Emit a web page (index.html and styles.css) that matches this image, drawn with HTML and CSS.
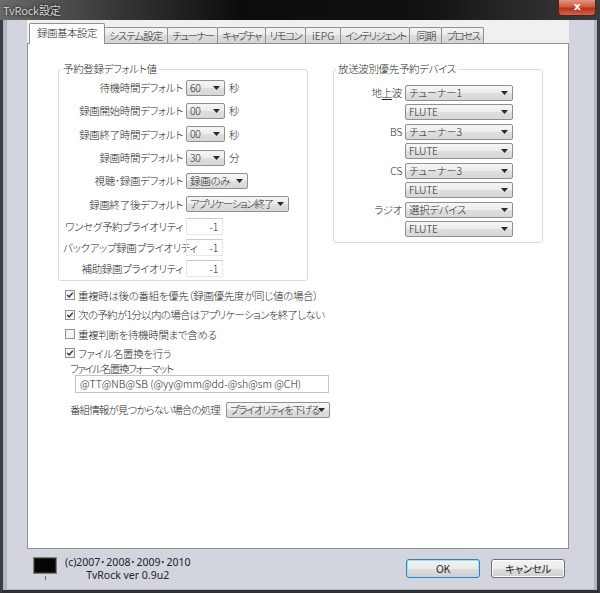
FILE: index.html
```html
<!DOCTYPE html>
<html>
<head>
<meta charset="utf-8">
<link rel="stylesheet" href="styles.css">
</head>
<body>

<div class="window">
  <div class="titlebar">
    <span class="title">TvRock設定</span>
    <div class="closebtn">x</div>
  </div>

  <div class="frame">
    <div class="tabstrip">
      <div class="tab active">録画基本設定</div>
      <div class="tab">システム設定</div>
      <div class="tab kana">チューナー</div>
      <div class="tab kana">キャプチャ</div>
      <div class="tab kana">リモコン</div>
      <div class="tab latin">iEPG</div>
      <div class="tab kana">インテリジェント</div>
      <div class="tab wide">同期</div>
      <div class="tab kana">プロセス</div>
    </div>

    <div class="panel">
      <div class="groups">
        <!-- left group -->
        <fieldset class="group defaults">
          <legend>予約登録デフォルト値</legend>
          <div class="row">
            <span class="lbl">待機時間デフォルト</span>
            <div class="combo num"><span>60</span><svg class="arrow" viewBox="0 0 7 4"><path d="M0 0h7L3.5 4z"/></svg></div>
            <span class="unit">秒</span>
          </div>
          <div class="row">
            <span class="lbl">録画開始時間デフォルト</span>
            <div class="combo num"><span>00</span><svg class="arrow" viewBox="0 0 7 4"><path d="M0 0h7L3.5 4z"/></svg></div>
            <span class="unit">秒</span>
          </div>
          <div class="row">
            <span class="lbl">録画終了時間デフォルト</span>
            <div class="combo num"><span>00</span><svg class="arrow" viewBox="0 0 7 4"><path d="M0 0h7L3.5 4z"/></svg></div>
            <span class="unit">秒</span>
          </div>
          <div class="row">
            <span class="lbl">録画時間デフォルト</span>
            <div class="combo num"><span>30</span><svg class="arrow" viewBox="0 0 7 4"><path d="M0 0h7L3.5 4z"/></svg></div>
            <span class="unit">分</span>
          </div>
          <div class="row">
            <span class="lbl">視聴･録画デフォルト</span>
            <div class="combo mode"><span>録画のみ</span><svg class="arrow" viewBox="0 0 7 4"><path d="M0 0h7L3.5 4z"/></svg></div>
          </div>
          <div class="row">
            <span class="lbl">録画終了後デフォルト</span>
            <div class="combo after"><span>アプリケーション終了</span><svg class="arrow" viewBox="0 0 7 4"><path d="M0 0h7L3.5 4z"/></svg></div>
          </div>
          <div class="row short">
            <span class="lbl">ワンセグ予約プライオリティ</span>
            <div class="field">-1</div>
          </div>
          <div class="row short">
            <span class="lbl">バックアップ録画プライオリティ</span>
            <div class="field">-1</div>
          </div>
          <div class="row short">
            <span class="lbl">補助録画プライオリティ</span>
            <div class="field">-1</div>
          </div>
        </fieldset>

        <!-- right group -->
        <fieldset class="group devices">
          <legend>放送波別優先予約デバイス</legend>
          <div class="devgrid">
            <span class="lbl">地<u>上</u>波</span>
            <div class="combo dev"><span>チューナー1</span><svg class="arrow" viewBox="0 0 7 4"><path d="M0 0h7L3.5 4z"/></svg></div>
            <span></span>
            <div class="combo dev"><span>FLUTE</span><svg class="arrow" viewBox="0 0 7 4"><path d="M0 0h7L3.5 4z"/></svg></div>
            <span class="lbl">BS</span>
            <div class="combo dev"><span>チューナー3</span><svg class="arrow" viewBox="0 0 7 4"><path d="M0 0h7L3.5 4z"/></svg></div>
            <span></span>
            <div class="combo dev"><span>FLUTE</span><svg class="arrow" viewBox="0 0 7 4"><path d="M0 0h7L3.5 4z"/></svg></div>
            <span class="lbl">CS</span>
            <div class="combo dev"><span>チューナー3</span><svg class="arrow" viewBox="0 0 7 4"><path d="M0 0h7L3.5 4z"/></svg></div>
            <span></span>
            <div class="combo dev"><span>FLUTE</span><svg class="arrow" viewBox="0 0 7 4"><path d="M0 0h7L3.5 4z"/></svg></div>
            <span class="lbl">ラジオ</span>
            <div class="combo dev"><span>選択デバイス</span><svg class="arrow" viewBox="0 0 7 4"><path d="M0 0h7L3.5 4z"/></svg></div>
            <span></span>
            <div class="combo dev"><span>FLUTE</span><svg class="arrow" viewBox="0 0 7 4"><path d="M0 0h7L3.5 4z"/></svg></div>
          </div>
        </fieldset>
      </div>

      <div class="checks">
        <div class="check">
          <svg class="box" viewBox="0 0 10 10"><rect x="0.5" y="0.5" width="9" height="9"/><path class="tick" d="M2.2 5l2 2 3.6-4.4"/></svg>
          <span>重複時は後の番組を優先（録画優先度が同じ値の場合）</span>
        </div>
        <div class="check">
          <svg class="box" viewBox="0 0 10 10"><rect x="0.5" y="0.5" width="9" height="9"/><path class="tick" d="M2.2 5l2 2 3.6-4.4"/></svg>
          <span class="kana">次の予約が1分以内の場合はアプリケーションを終了しない</span>
        </div>
        <div class="check">
          <svg class="box" viewBox="0 0 10 10"><rect x="0.5" y="0.5" width="9" height="9"/></svg>
          <span>重複判断を待機時間まで含める</span>
        </div>
        <div class="check">
          <svg class="box" viewBox="0 0 10 10"><rect x="0.5" y="0.5" width="9" height="9"/><path class="tick" d="M2.2 5l2 2 3.6-4.4"/></svg>
          <span>ファイル名置換を行う</span>
        </div>
      </div>

      <div class="format">
        <div class="format-label">ファイル名置換フォーマット</div>
        <div class="format-input">@TT@NB@SB (@yy@mm@dd-@sh@sm @CH)</div>
      </div>

      <div class="notfound">
        <span class="kana">番組情報が見つからない場合の処理</span>
        <div class="combo prio"><span>プライオリティを下げる</span><svg class="arrow" viewBox="0 0 7 4"><path d="M0 0h7L3.5 4z"/></svg></div>
      </div>
    </div>

    <div class="footer">
      <div class="swatch">
        <div class="swatch-box"></div>
        <div class="swatch-tick"></div>
      </div>
      <div class="credits">
        <div>(c)2007･2008･2009･2010</div>
        <div>TvRock ver 0.9u2</div>
      </div>
      <div class="buttons">
        <div class="btn default">OK</div>
        <div class="btn">キャンセル</div>
      </div>
    </div>
  </div>
</div>

</body>
</html>
```

FILE: styles.css
```css
* {box-sizing: border-box;}

html, body {
  margin: 0;
}

body {
  width: 600px;
  height: 593px;
  overflow: hidden;
  background: #1e1e1e;
  font-family: "Noto Sans CJK JP", sans-serif;
  font-size: 10.5px;
  font-weight: 300;
  letter-spacing: -0.35px;
  font-feature-settings: "palt";
  color: #262626;
}

.window {
  width: 600px;
  height: 593px;
  display: flex;
  flex-direction: column;
}

/* Title bar */
.titlebar {
  height: 20px;
  display: flex;
  align-items: flex-start;
  background: linear-gradient(to right, #6a6a6a 0%, #3a3a3a 18%, #0c0c0c 40%, #111 70%, #3c3c3c 100%);
}

.title {
  padding: 2px 0 0 3px;
  line-height: 16px;
  font-size: 11px;
  font-weight: 400;
  letter-spacing: -0.2px;
  color: #d8d8d8;
  text-shadow: 0 0 3px #000;
}

.closebtn {
  margin-left: auto;
  margin-right: 4px;
  width: 38px;
  height: 16px;
  border: 1px solid #5a1c14;
  border-top: 0;
  border-radius: 0 0 4px 4px;
  background: linear-gradient(#e3957f, #cf5a40 45%, #b83218 55%, #d0644a);
  color: #fff;
  font-family: "DejaVu Sans", sans-serif;
  font-weight: bold;
  font-size: 11px;
  line-height: 14px;
  text-align: center;
}

/* Frame */
.frame {
  flex: 1;
  display: flex;
  flex-direction: column;
  background: #d2d5de;
  border-left: 3px solid #3b3d42;
  border-right: 3px solid #3b3d42;
  border-bottom: 3px solid #2e3034;
  box-shadow: inset 4px 0 0 #b3b7c0, inset -3px 0 0 #b3b7c0, inset 0 -1px 0 #b3b7c0;
  padding: 0 28px 0 24px;
}

/* Tabs */
.tabstrip {
  height: 23px;
  display: flex;
  align-items: flex-end;
  padding-left: 4px;
  background: #f0f0f0;
}

.tab {
  height: 16px;
  padding: 0 5px;
  margin-right: -1px;
  border: 1px solid #8e9199;
  border-bottom: 0;
  border-radius: 2px 2px 0 0;
  background: linear-gradient(#f3f3f3, #ebebeb 50%, #dcdcdc 50%, #d4d4d4);
  line-height: 15px;
  letter-spacing: -1px;
  white-space: nowrap;
}

.tab.kana {
  padding: 0 4px;
  letter-spacing: -1.6px;
}

.tab.latin {
  padding: 0 6px;
  letter-spacing: 0;
}

.tab.wide {
  padding: 0 6px;
}

.tab.active {
  position: relative;
  z-index: 1;
  height: 21px;
  margin: 0 -1px -1px -2px;
  padding: 0 7px;
  background: #fff;
  letter-spacing: -0.5px;
  line-height: 18px;
}

.tab.active + .tab {
  margin-left: -1px;
}

.panel {
  height: 506px;
  background: #fff;
  border: 1px solid #8c8f96;
  padding: 18px 0 0 30px;
}

/* Group boxes */
.groups {
  display: flex;
  align-items: flex-start;
  gap: 25px;
}

.group {
  margin: 0;
  min-width: 0;
  border: 1px solid #d9dadd;
  border-radius: 3px;
  padding: 0 0 1px 4px;
}

.group legend {
  padding: 0 2px;
  margin-left: -2px;
  line-height: 14px;
}

.defaults {
  width: 250px;
}

.devices {
  width: 210px;
  padding-bottom: 3px;
}

.row {
  height: 23.3px;
  display: flex;
  align-items: center;
}

.row.short {
  height: 21px;
}

.lbl {
  width: 120px;
  margin-right: 3px;
  text-align: right;
  white-space: nowrap;
}

.lbl u {
  text-decoration-thickness: 1px;
  text-underline-offset: 2px;
}

.unit {
  margin-left: 4px;
}

.kana {
  letter-spacing: -0.9px;
}

/* Combo boxes */
.combo {
  height: 16px;
  display: flex;
  align-items: center;
  padding-left: 3px;
  border: 1px solid #8f9092;
  border-radius: 2px;
  background: linear-gradient(#f6f6f6, #ececec 50%, #dedede 50%, #d8d8d8);
  white-space: nowrap;
  overflow: hidden;
}

.combo span {
  flex: 1;
  min-width: 0;
  line-height: 14px;
}

.combo.after span,
.combo.prio span {
  letter-spacing: -1.3px;
}

.arrow {
  flex: none;
  width: 7px;
  height: 4px;
  margin: 0 4px 0 2px;
  fill: #2a2a2a;
}

.combo.num {width: 39px;}
.combo.mode {width: 62px;}
.combo.after {width: 103px;}
.combo.dev {width: 108px;}
.combo.prio {width: 104px;}

.field {
  width: 37px;
  height: 17px;
  padding-right: 4px;
  border: 1px solid #e6e7ec;
  border-top-color: #c9cacf;
  text-align: right;
  line-height: 15px;
}

/* Right group grid */
.devgrid {
  display: grid;
  grid-template-columns: 64px 108px;
  grid-auto-rows: 19.5px;
  column-gap: 3px;
  align-items: center;
  margin-top: 7px;
}

.devgrid .lbl {
  width: auto;
  margin: 0;
}

/* Checkboxes */
.checks {
  padding-left: 7px;
  margin-top: 5px;
}

.check {
  height: 19.3px;
  display: flex;
  align-items: center;
  gap: 3px;
}

.check .kana {
  letter-spacing: -0.7px;
}

.box {
  width: 10px;
  height: 10px;
}

.box rect {
  fill: #f4f4f4;
  stroke: #8f8f8f;
}

.box .tick {
  fill: none;
  stroke: #2d3a4d;
  stroke-width: 1.5;
}

.format {
  padding-left: 12px;
}

.format-label {
  line-height: 12px;
  letter-spacing: -1.4px;
}

.format-input {
  width: 254px;
  height: 18px;
  margin-left: 5px;
  padding-left: 4px;
  border: 1px solid #c4c5c9;
  line-height: 16px;
  letter-spacing: 0;
}

.notfound {
  display: flex;
  align-items: center;
  gap: 6px;
  margin-top: 9px;
  padding-left: 12px;
}

/* Footer */
.footer {
  flex: 1;
  display: flex;
  align-items: center;
  padding-bottom: 2px;
}

.swatch {
  margin-left: 6px;
  display: flex;
  flex-direction: column;
  align-items: center;
}

.swatch-box {
  width: 24px;
  height: 17px;
  background: #050505;
  border: 1px solid #7c7c7c;
  box-shadow: inset 0 0 0 1px #2a2a2a;
}

.swatch-tick {
  width: 1px;
  height: 4px;
  margin-top: 2px;
  background: #666;
}

.credits {
  margin-left: 8px;
  font-family: "Noto Sans", sans-serif;
  font-size: 10.5px;
  font-weight: 400;
  letter-spacing: 0;
  line-height: 13px;
  text-align: center;
  color: #222;
}

.buttons {
  margin-left: auto;
  margin-right: 4px;
  display: flex;
  gap: 11px;
}

.btn {
  width: 74px;
  height: 19px;
  border: 1px solid #707070;
  border-radius: 3px;
  background: linear-gradient(#f3f3f3, #ebebeb 50%, #dddddd 50%, #cfcfcf);
  box-shadow: inset 0 0 0 1px #fcfcfc;
  text-align: center;
  line-height: 17px;
  font-weight: 400;
}

.btn.default {
  border-color: #3c7fb1;
  box-shadow: inset 0 0 0 1px #a6dcf6;
}
```
